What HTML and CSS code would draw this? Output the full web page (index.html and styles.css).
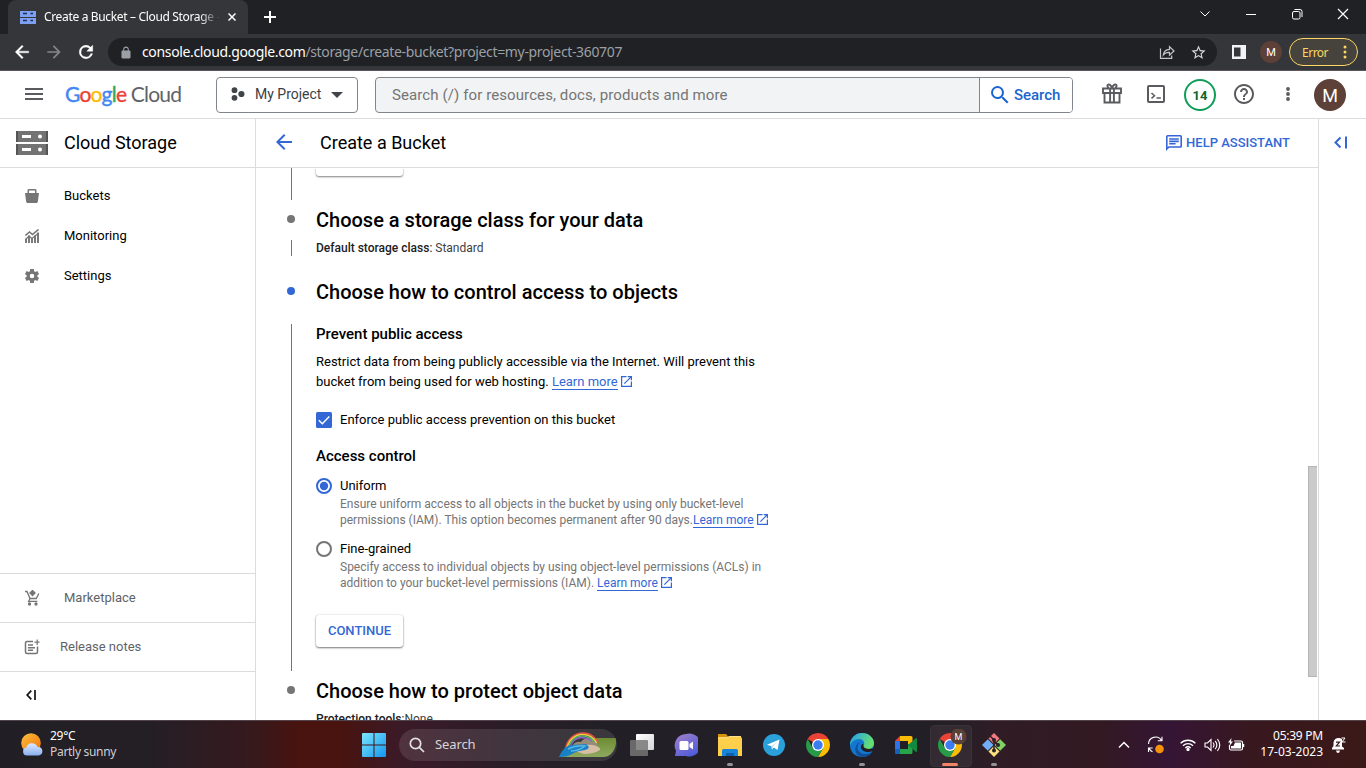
FILE: index.html
```html
<!DOCTYPE html>
<html lang="en">
<head>
<meta charset="utf-8">
<title>Create a Bucket – Cloud Storage</title>
<link rel="stylesheet" href="styles.css">
</head>
<body>
<div class="desktop">
  <div class="tabstrip">
    <div class="tab">
      <svg class="favicon" width="16" height="13" viewBox="0 0 16 13"><rect width="16" height="6" fill="#7da0f2"/><rect y="7" width="16" height="6" fill="#7da0f2"/><path d="M3 2.500h4M3 9.500h4" stroke="#202c55" stroke-width="1.500"/><path d="M10.500 2.500h2.500M10.500 9.500h2.500" stroke="#202c55" stroke-width="1.500"/></svg>
      <span class="tab-title">Create a Bucket – Cloud Storage -</span>
      <svg class="tab-close" width="8" height="8" viewBox="0 0 8 8"><path d="M.5.5l7 7M7.500.5l-7 7" stroke="#fff" stroke-width="1.500"/></svg>
    </div>
    <svg class="tab-new" width="12" height="12" viewBox="0 0 12 12"><path d="M6 0v12M0 6h12" stroke="#fff" stroke-width="2"/></svg>
    <div class="window-controls">
      <svg width="12" height="12" viewBox="0 0 12 12"><path d="M1.500 3.500L6 8l4.500-4.500" fill="none" stroke="#fff"/></svg>
      <svg width="12" height="12" viewBox="0 0 12 12"><path d="M1 6.500h10" stroke="#fff"/></svg>
      <svg width="12" height="12" viewBox="0 0 12 12" fill="none" stroke="#fff"><rect x="1.500" y="3.500" width="7.500" height="7.500" rx="1.500"/><path d="M3.500 1.500H9A2 2 0 0 1 11 3.500V9"/></svg>
      <svg width="12" height="12" viewBox="0 0 12 12"><path d="M1 1l10 10M11 1L1 11" stroke="#fff" stroke-width="1.200"/></svg>
    </div>
  </div>

  <div class="toolbar">
    <svg class="nav-back" width="20" height="20" viewBox="0 0 24 24" fill="#fff" stroke="#fff" stroke-width=".5"><path d="M20 11H7.830l5.590-5.590L12 4l-8 8 8 8 1.410-1.410L7.830 13H20z"/></svg>
    <svg class="nav-forward" width="20" height="20" viewBox="0 0 24 24" fill="#85868a"><path d="M12 4l-1.410 1.410L16.170 11H4v2h12.170l-5.580 5.590L12 20l8-8z"/></svg>
    <svg class="nav-reload" width="20" height="20" viewBox="0 0 24 24" fill="#fff" stroke="#fff" stroke-width=".6"><path d="M17.650 6.350A7.960 7.960 0 0 0 12 4a8 8 0 1 0 7.730 10h-2.080A6 6 0 1 1 12 6c1.660 0 3.140.69 4.220 1.780L13 11h7V4z"/></svg>
    <div class="omnibox">
      <svg class="lock" width="12" height="13" viewBox="3 0 18 23" fill="#9aa0a6"><path d="M18 8h-1V6c0-2.760-2.240-5-5-5S7 3.240 7 6v2H6c-1.100 0-2 .9-2 2v10c0 1.100.9 2 2 2h12c1.100 0 2-.9 2-2V10c0-1.100-.9-2-2-2zm-2.900 0H8.900V6a3.100 3.100 0 0 1 6.200 0z"/></svg>
      <span class="url"><b>console.cloud.google.com</b>/storage/create-bucket?project=my-project-360707</span>
      <svg class="share" width="16" height="16" viewBox="0 0 16 16" fill="none" stroke="#c4c5c8" stroke-width="1.200"><path d="M1.500 4.500v9.900h11.200v-3"/><path d="M4.300 11c.4-3.600 2.500-5.500 6.200-5.700V2.600L15 7l-4.500 4.200V8.400C7.700 8.300 5.800 9 4.300 11z"/></svg>
      <svg class="star" width="17" height="17" viewBox="0 0 24 24" fill="#d6d7d9"><path d="M22 9.240l-7.190-.62L12 2 9.190 8.630 2 9.240l5.460 4.730L5.820 21 12 17.270 18.180 21l-1.630-7.030zM12 15.400l-3.760 2.270 1-4.280-3.320-2.880 4.380-.38L12 6.100l1.710 4.040 4.380.38-3.320 2.880 1 4.280z"/></svg>
    </div>
    <svg class="sidepanel" width="14" height="14" viewBox="0 0 14 14"><path fill="#f1f3f4" fill-rule="evenodd" d="M0 0h14v14H0zM2 2.500v9h6.500v-9z"/></svg>
    <span class="profile-small">M</span>
    <div class="error-pill"><span>Error</span><svg width="4" height="14" viewBox="0 0 4 14" fill="#fdd663"><circle cx="2" cy="2" r="1.500"/><circle cx="2" cy="7" r="1.500"/><circle cx="2" cy="12" r="1.500"/></svg></div>
  </div>

  <header class="cloud-header">
    <svg class="menu" width="18" height="12" viewBox="0 0 18 12"><path d="M0 1h18M0 6h18M0 11h18" stroke="#5a5b5e" stroke-width="2"/></svg>
    <div class="logo"><span class="blue">G</span><span class="red">o</span><span class="yellow">o</span><span class="blue">g</span><span class="green">l</span><span class="red">e</span> <span class="cloud">Cloud</span></div>
    <div class="project">
      <svg width="14" height="14" viewBox="0 0 14 14" fill="#414549"><circle cx="3.500" cy="3.200" r="2.900"/><circle cx="3.500" cy="10.800" r="2.900"/><circle cx="10.400" cy="7" r="3.100"/></svg>
      <span>My Project</span>
      <svg class="caret" width="12" height="6" viewBox="0 0 12 6"><path d="M0 0h12L6 6z" fill="#414549"/></svg>
    </div>
    <div class="searchbar">
      <span class="placeholder">Search (/) for resources, docs, products and more</span>
      <div class="search-button"><svg width="24" height="24" viewBox="0 0 24 24" fill="#1b66d1"><path d="M15.500 14h-.79l-.28-.27A6.471 6.471 0 0 0 16 9.500 6.500 6.500 0 1 0 9.500 16c1.610 0 3.090-.59 4.230-1.570l.27.28v.79l5 4.990L20.490 19zm-6 0C7.010 14 5 11.990 5 9.500S7.010 5 9.500 5 14 7.010 14 9.500 11.990 14 9.500 14z"/></svg><span>Search</span></div>
    </div>
    <div class="header-icons">
      <div><svg width="20" height="21" viewBox="0 0 20 21" fill="none" stroke="#5a5b5e" stroke-width="1.900"><path d="M1 5.500h18v4.500H1zM2.500 10v9.500h15V10M8.100 5.500v14M11.900 5.500v14"/><path d="M10 5C8.800 2 7.400 1 6.100 1.600S5.400 4.500 7 5M10 5c1.200-3 2.600-4 3.900-3.400S14.600 4.500 13 5"/></svg></div>
      <div><svg width="18" height="18" viewBox="0 0 18 18" fill="none" stroke="#5a5b5e"><rect x="1" y="1" width="16" height="16" rx="1" stroke-width="2"/><path d="M4.500 8l3 2.700-3 2.700M9.500 13h4.300" stroke-width="1.500"/></svg></div>
      <div><span class="notice-count">14</span></div>
      <div><svg width="24" height="24" viewBox="0 0 24 24" fill="#5a5b5e"><path d="M11 18h2v-2h-2zM12 2C6.480 2 2 6.480 2 12s4.480 10 10 10 10-4.480 10-10S17.520 2 12 2zm0 18c-4.410 0-8-3.590-8-8s3.590-8 8-8 8 3.590 8 8-3.590 8-8 8zm0-14c-2.210 0-4 1.790-4 4h2c0-1.100.9-2 2-2s2 .9 2 2c0 2-3 1.750-3 5h2c0-2.250 3-2.500 3-5 0-2.210-1.790-4-4-4z"/></svg></div>
      <div><svg width="6" height="14" viewBox="0 0 6 14" fill="#5a5b5e"><circle cx="3" cy="2" r="1.900"/><circle cx="3" cy="7" r="1.900"/><circle cx="3" cy="12" r="1.900"/></svg></div>
      <div class="last"><span class="avatar">M</span></div>
    </div>
  </header>

  <div class="workspace">
    <nav class="sidebar">
      <div class="product">
        <svg width="32" height="24" viewBox="0 0 32 24"><path d="M0 0h32v11H0zM0 13h32v11H0z" fill="#737373"/><path d="M0 0h2v11H0zM30 0h2v11h-2zM0 13h2v11H0zM30 13h2v11h-2z" fill="#555"/><path d="M6 4h9v3H6zM6 17h9v3H6z" fill="#fff"/><circle cx="24" cy="5.500" r="2" fill="#fff"/><circle cx="24" cy="18.500" r="2" fill="#fff"/></svg>
        <span>Cloud Storage</span>
      </div>
      <div class="nav-list">
        <div class="nav-item"><svg width="14" height="14" viewBox="0 0 14 14" fill="#757575"><path fill-rule="evenodd" d="M3.500 0h7l1 1v3H14l-1.200 9-1 1H2.200l-1-1L0 4h2.500V1zM4 1.500V4h6V1.500z"/></svg><span>Buckets</span></div>
        <div class="nav-item"><svg width="14" height="14" viewBox="0 0 14 14" fill="none" stroke="#757575"><path d="M.4 6.500L4.500 3l3 2.500L13.500.5" stroke-width="1.600"/><path d="M1 14V10M4 14V6.500M7 14V9M10 14V6.500M13 14V3.500" stroke-width="1.900"/><path d="M.4 10.500L4 7l3 2.500 6-5" stroke-width="1.200"/></svg><span>Monitoring</span></div>
        <div class="nav-item"><svg width="14" height="14" viewBox="2 2 20 20"><path fill="#757575" fill-rule="evenodd" d="M9.500 2h5l.6 3.300 1.500.9 3.100-1.200 2.300 4.200-2.500 2v1.600l2.500 2-2.300 4.200-3.100-1.200-1.500.9-.6 3.300h-5l-.6-3.300-1.500-.9L4.300 19 2 14.800l2.500-2v-1.600L2 9.200 4.300 5l3.100 1.200 1.500-.9zM12 8.800a3.200 3.200 0 1 0 0 6.400 3.200 3.200 0 0 0 0-6.400z"/></svg><span>Settings</span></div>
      </div>
      <div class="side-foot market"><svg width="16" height="16" viewBox="0 0 16 16" fill="none" stroke="#757575" stroke-width="1.300"><path d="M1 1.500h2l3 7h6.300l2.500-5"/><path d="M6 8.500L4.700 11.300h8.600"/><path d="M8.500.5L11 3 8.500 5.500 6 3z" fill="#757575"/><circle cx="5.500" cy="14" r="1" fill="#757575"/><circle cx="12" cy="14" r="1" fill="#757575"/></svg><span>Marketplace</span></div>
      <div class="side-foot notes"><svg width="16" height="16" viewBox="0 0 16 16" fill="none" stroke="#757575" stroke-width="1.500"><path d="M9 2.500H3A1.500 1.500 0 0 0 1.500 4v9A1.500 1.500 0 0 0 3 14.500h9a1.500 1.500 0 0 0 1.500-1.500V7.500"/><path d="M4 6h5M4 8.700h7M4 11.300h5"/><path d="M13.200.5v5.400M10.500 3.200h5" stroke-width="1.200"/></svg><span>Release notes</span></div>
      <div class="side-foot collapse"><svg width="10" height="10" viewBox="0 0 10 10" fill="none" stroke="#111" stroke-width="1.700"><path d="M5.300.7L1.200 5l4.100 4.300M9 0v10"/></svg></div>
    </nav>

    <main class="main">
      <div class="page-bar">
        <svg width="24" height="24" viewBox="0 0 24 24" fill="#3367d6"><path d="M20 11H7.830l5.590-5.590L12 4l-8 8 8 8 1.410-1.410L7.830 13H20z"/></svg>
        <h1>Create a Bucket</h1>
        <div class="help"><svg width="16" height="16" viewBox="2 2 20 20" fill="#3367d6"><path d="M4 4h16v12H5.170L4 17.170V4m0-2c-1.100 0-1.990.9-1.990 2L2 22l4-4h14c1.100 0 2-.9 2-2V4c0-1.100-.9-2-2-2zm2 10h8v2H6zm0-3h12v2H6zm0-3h12v2H6z"/></svg><span>HELP ASSISTANT</span></div>
      </div>
      <div class="scroller">
        <div class="steps">
          <section class="step location"><div class="rail"></div><div class="button-end"></div></section>
          <section class="step storage">
            <i class="dot"></i><h2>Choose a storage class for your data</h2>
            <div class="rail"></div><p class="summary"><b>Default storage class</b>: <span>Standard</span></p>
          </section>
          <section class="step access">
            <i class="dot active"></i><h2>Choose how to control access to objects</h2>
            <div class="rail"></div>
            <div class="form">
              <h3>Prevent public access</h3>
              <p class="copy">Restrict data from being publicly accessible via the Internet. Will prevent this<br>bucket from being used for web hosting. <a>Learn more</a><svg class="ext" width="11" height="11" viewBox="3 3 18 18" fill="#3367d6"><path d="M19 19H5V5h7V3H3v18h18v-9h-2zM14 3v2h3.590l-9.830 9.830 1.410 1.410L19 6.410V10h2V3z"/></svg></p>
              <label class="choice check"><svg width="16" height="16" viewBox="0 0 16 16"><rect width="16" height="16" rx="1.500" fill="#3367d6"/><path d="M2.800 8.200l3.500 3.500 7-7.200" fill="none" stroke="#fff" stroke-width="1.500"/></svg><span>Enforce public access prevention on this bucket</span></label>
              <h3>Access control</h3>
              <label class="choice uniform"><svg width="16" height="16" viewBox="0 0 16 16"><circle cx="8" cy="8" r="7" fill="none" stroke="#3367d6" stroke-width="2"/><circle cx="8" cy="8" r="4.200" fill="#3367d6"/></svg><span>Uniform</span></label>
              <p class="hint">Ensure uniform access to all objects in the bucket by using only bucket-level<br>permissions (IAM). This option becomes permanent after 90 days.<a>Learn more</a><svg class="ext" width="11" height="11" viewBox="3 3 18 18" fill="#3367d6"><path d="M19 19H5V5h7V3H3v18h18v-9h-2zM14 3v2h3.590l-9.830 9.830 1.410 1.410L19 6.410V10h2V3z"/></svg></p>
              <label class="choice fine"><svg width="16" height="16" viewBox="0 0 16 16"><circle cx="8" cy="8" r="7" fill="none" stroke="#757575" stroke-width="2"/></svg><span>Fine-grained</span></label>
              <p class="hint">Specify access to individual objects by using object-level permissions (ACLs) in<br>addition to your bucket-level permissions (IAM). <a>Learn more</a><svg class="ext" width="11" height="11" viewBox="3 3 18 18" fill="#3367d6"><path d="M19 19H5V5h7V3H3v18h18v-9h-2zM14 3v2h3.590l-9.830 9.830 1.410 1.410L19 6.410V10h2V3z"/></svg></p>
              <div class="continue">CONTINUE</div>
            </div>
          </section>
          <section class="step protect">
            <i class="dot"></i><h2>Choose how to protect object data</h2>
            <div></div><p class="summary"><b>Protection tools</b>:<span>None</span></p>
          </section>
        </div>
        <div class="scroll-track"><div class="scroll-thumb"></div></div>
      </div>
    </main>
    <aside class="info-rail"><svg width="14" height="13" viewBox="0 0 14 13" fill="none" stroke="#3367d6" stroke-width="2"><path d="M6.500 1.500L1.500 6.500l5 5M12 .5v12"/></svg></aside>
  </div>

  <footer class="taskbar">
    <svg class="weather-icon" width="22" height="23" viewBox="0 0 22 23"><defs><linearGradient id="sun" x2="1" y2="1"><stop stop-color="#fcc13b"/><stop offset="1" stop-color="#f2700d"/></linearGradient><linearGradient id="puff" x2="0" y2="1"><stop stop-color="#dbe9ff"/><stop offset="1" stop-color="#8ab0ef"/></linearGradient></defs><circle cx="10" cy="10" r="9.800" fill="url(#sun)"/><path d="M6 22.500a4 4 0 0 1-.8-7.900A6 6 0 0 1 16.500 14a4.300 4.300 0 0 1 1.300 8.500z" fill="url(#puff)"/></svg>
    <div class="weather"><div>29°C</div><div class="cond">Partly sunny</div></div>
    <svg class="start" width="24" height="24" viewBox="0 0 24 24"><defs><linearGradient id="win" x2="1" y2="1"><stop stop-color="#7ce6fd"/><stop offset="1" stop-color="#1296ef"/></linearGradient></defs><path fill="url(#win)" d="M1 0h10.500v11.500H0V1q0-1 1-1zM12.500 0H23q1 0 1 1v10.500H12.500zM0 12.500h11.500V24H1q-1 0-1-1zM12.500 12.500H24V23q0 1-1 1H12.500z"/></svg>
    <div class="task-search">
      <svg width="16" height="16" viewBox="0 0 16 16" fill="none" stroke="#e4e1e4" stroke-width="1.700"><circle cx="6.500" cy="6.500" r="5.200"/><path d="M10.300 10.300L15 15"/></svg><span>Search</span>
      <svg class="rainbow" width="58" height="25" viewBox="0 0 58 25"><defs><linearGradient id="hill" x2="0" y2="1"><stop stop-color="#6d8c34"/><stop offset="1" stop-color="#8fa95e"/></linearGradient></defs><path d="M33 6h24q1 10-5 16-3 3-8 3H0l6-5z" fill="url(#hill)"/><path d="M12 15Q16 9 22 10q3-5 9-3 5 1 8 5l-3 4z" fill="#958b78"/><path d="M10 17q10-5 24-4 8 2 7 5-6 4-16 4z" fill="#d6bda5"/><g fill="none"><path d="M6 20C7 7 16 1 24 1s13 5 15 10" stroke="#e9524a" stroke-width="1.500"/><path d="M7.500 19C9 8 16 2.500 23.500 2.500S35 6 37.500 11" stroke="#f7cf3e" stroke-width="1.600"/><path d="M9 18C10 9 17 4 23 4s10 3 12.500 6" stroke="#54b867" stroke-width="1.500"/><path d="M10.500 17C12 10 17 5.500 23 5.500S31 8 33 9" stroke="#8c62c7" stroke-width="1.300"/></g><path d="M0 25Q5 13 13 13l14-1q6 4-1 6-9 1-13 4-4 3-13 3z" fill="#1880c4"/><path d="M9 17q8-4 17-3-6 5-14 5" fill="none" stroke="#58b9e7" stroke-width="1.500"/></svg>
    </div>
    <div class="apps">
      <div class="app"><svg width="24" height="22" viewBox="0 0 24 22"><defs><linearGradient id="pane" x2="1" y2="1"><stop stop-color="#fff"/><stop offset="1" stop-color="#d5d5d5"/></linearGradient></defs><rect x="6" width="18" height="16" rx="1" fill="url(#pane)"/><rect y="6" width="18" height="16" rx="1" fill="#777" fill-opacity=".85"/></svg></div>
      <div class="app"><svg width="24" height="24" viewBox="0 0 24 24"><defs><linearGradient id="chat" x2=".7" y2="1"><stop stop-color="#a481c7"/><stop offset="1" stop-color="#4d5bdb"/></linearGradient></defs><path d="M12 1a11.500 11.500 0 1 1 0 22H1l1-5A11.500 11.500 0 0 1 12 1z" fill="url(#chat)"/><rect x="5.500" y="8" width="9" height="9" rx="1.500" fill="#fff"/><path d="M15.500 11L19 8.500v8L15.500 14z" fill="#fff"/></svg></div>
      <div class="app open"><svg width="24" height="22" viewBox="0 0 24 22"><path d="M0 0h8l2.500 3H0z" fill="#d89409"/><path d="M0 3h22.500q1.500 0 1.500 1.500V22H0z" fill="#fdcf4b"/><path d="M0 4h9l2-1.500h12" fill="none" stroke="#ffe08a"/><path d="M4 22v-5.500q0-1.500 1.500-1.500h13q1.500 0 1.500 1.500V22z" fill="#1785d8"/><path d="M8 19h8v3H8z" fill="#0d60a9"/></svg></div>
      <div class="app"><svg width="22" height="22" viewBox="0 0 22 22"><circle cx="11" cy="11" r="11" fill="#2aa1da"/><path d="M4 10.800L16.500 5.500 14.500 16 10.800 13.500 9 15.500 8.500 12.300z" fill="#fff"/><path d="M8.500 12.300L14 8l-4 4.800-1 2.700z" fill="#c5dceb"/></svg></div>
      <div class="app"><svg width="24" height="24" viewBox="0 0 24 24"><path d="M12 12L1.610 6A12 12 0 0 1 22.390 6z" fill="#ea4335"/><path d="M12 12V6h10.390A12 12 0 0 1 12 24l5.200-9z" fill="#fbbc05"/><path d="M6.800 15L1.610 6A12 12 0 0 0 12 24l5.200-9z" fill="#289b48"/><circle cx="12" cy="12" r="6" fill="#fff"/><circle cx="12" cy="12" r="4.700" fill="#3b7df0"/></svg></div>
      <div class="app open"><svg width="24" height="24" viewBox="0 0 24 24"><defs><linearGradient id="edge" x2="1" y2=".4"><stop stop-color="#249ff0"/><stop offset="1" stop-color="#66df70"/></linearGradient></defs><path d="M0 12C0 5 5 0 12 0s12 5 12 12l-2 7q-4 5-10 5C5 24 0 19 0 12z" fill="#1477cf"/><path d="M0 10C2 3 7 0 12 0c7 0 12 5 12 10 0 4-3 6-6 6-4 0-5-2-4-4 1-3-1-6-5-6C5 6 2 8 0 12z" fill="url(#edge)"/><path d="M10 9c-5 5-2 12 5 12 3 0 5-1 7-2-3 5-8 5-10 5C6 23 4 17 6 13q1-3 4-4z" fill="#124f99"/><path d="M13.500 11.500c-1.500 3 3 6 10.500 3.500l-1 3c-7 3-13-1-12-5q1-3 2.500-1.500z" fill="#221f26"/></svg></div>
      <div class="app"><svg width="22" height="18" viewBox="0 0 22 18"><path d="M5 0v5H0z" fill="#ea4335"/><path d="M5 0h11q1.500 0 1.500 1.500V9H13V5H5z" fill="#fbbc05"/><path d="M0 5h5v8H0z" fill="#2e73e8"/><path d="M0 13h5v5H1q-1 0-1-1z" fill="#1760be"/><path d="M5 13h8V8h4.500v8.500q0 1.500-1.500 1.500H5z" fill="#27a34a"/><path d="M13 9l8-7q1 0 1 1v12q0 1-1 1z" fill="#128940"/></svg></div>
      <div class="app open selected"><svg width="29" height="28" viewBox="0 0 29 28"><g transform="translate(0 4)"><path d="M12 12L1.610 6A12 12 0 0 1 22.390 6z" fill="#ea4335"/><path d="M12 12V6h10.390A12 12 0 0 1 12 24l5.200-9z" fill="#fbbc05"/><path d="M6.800 15L1.610 6A12 12 0 0 0 12 24l5.200-9z" fill="#289b48"/><circle cx="12" cy="12" r="6" fill="#fff"/><circle cx="12" cy="12" r="4.700" fill="#3b7df0"/></g><circle cx="20.500" cy="7.500" r="8" fill="#5b4037"/><text x="20.500" y="10.600" class="badge-letter">M</text></svg></div>
      <div class="app open"><svg width="24" height="24" viewBox="0 0 24 24"><path d="M12 0l5.500 5.500L12 11 6.500 5.500z" fill="#f27980"/><path d="M5.800 6.200L11.500 12l-5.700 5.800L0 12z" fill="#72abf7"/><path d="M18.200 6.200L24 12l-5.800 5.800L12.500 12z" fill="#82d164"/><path d="M12 13l5.500 5.500L12 24l-5.500-5.500z" fill="#fbe27d"/><path d="M8 3l4 4v11M12 8l4 4" stroke="#2b2227" stroke-width="1.500" fill="none"/><circle cx="12" cy="7" r="2" fill="#2b2227"/><circle cx="12" cy="17.500" r="2" fill="#2b2227"/><circle cx="16" cy="12" r="2" fill="#2b2227"/></svg></div>
    </div>
    <div class="tray">
      <svg class="tray-up" width="12" height="8" viewBox="0 0 12 8"><path d="M1 6.500l5-5 5 5" fill="none" stroke="#fff" stroke-width="1.500"/></svg>
      <svg class="tray-update" width="18" height="18" viewBox="0 0 18 18" fill="none" stroke="#fff" stroke-width="1.100"><path d="M1.500 8A7 7 0 0 1 14.500 4.500M15 .8v4h-4.200M5.500 15.800A7 7 0 0 1 2 12M1.500 16v-4h4.200"/><circle cx="12.500" cy="13" r="4.300" fill="#f7910b" stroke="none"/></svg>
      <svg class="tray-wifi" width="16" height="13" viewBox="0 0 16 13" fill="none" stroke="#fff" stroke-width="1.300"><path d="M.6 5.300a10.500 10.500 0 0 1 14.800 0M3 7.700a7 7 0 0 1 10 0M5.300 10a4 4 0 0 1 5.400 0"/><circle cx="8" cy="11.500" r="1" fill="#fff"/></svg>
      <svg class="tray-sound" width="17" height="14" viewBox="0 0 17 14" fill="none" stroke="#fff" stroke-width="1.100"><path d="M1 5h2.500L7 1.500v11L3.500 9H1zM9 4.500q2 2.500 0 5M11.200 2.800q3.300 4.200 0 8.400M13.400 1q4.700 6 0 12"/></svg>
      <svg class="tray-battery" width="17" height="13" viewBox="0 0 17 13"><path d="M6 3h7q1.500 0 1.500 1.500v6q0 1.500-1.500 1.500H3q-1.500 0-1.500-1.500V7" fill="none" stroke="#fff" stroke-width="1.200"/><path d="M7 4.500h6v6H3V8h2.500z" fill="#fff"/><path d="M15.500 6v3" stroke="#fff" stroke-width="1.500"/><path d="M3.500 0L0 4.500h2L1.500 8 5 3.500H3z" fill="#fff"/></svg>
      <div class="clock"><div>05:39 PM</div><div class="date">17-03-2023</div></div>
      <svg class="tray-bell" width="14" height="16" viewBox="0 0 14 16"><path d="M0 11l1.500-2V6a5 5 0 0 1 6-5L10 2v7.500L12 11v1.500H0zM4 13.500h4Q7.500 16 6 16t-2-2.500z" fill="#fff"/><path d="M4 5.200h3.500L4.300 9H8" fill="none" stroke="#381a20" stroke-width="1.200"/><path d="M9.500 1H13l-3 4h3.500" fill="none" stroke="#fff"/></svg>
    </div>
  </footer>
</div>
</body>
</html>
```
FILE: styles.css
```css
* { box-sizing: border-box; }
body { margin: 0; font-family: Roboto, "Liberation Sans", sans-serif; font-size: 13px; color: #000; overflow: hidden; }
svg { display: block; flex: none; }
h1, h2, h3, p { margin: 0; font-weight: 400; }
b { font-weight: 500; }
.desktop { width: 1366px; height: 768px; display: flex; flex-direction: column; background: #fff; white-space: nowrap; }

/* Browser chrome */
.tabstrip { height: 34px; flex: none; display: flex; align-items: center; background: #202124; font-family: "Noto Sans", sans-serif; }
.tab { width: 240px; height: 34px; margin-left: 8px; padding-left: 12px; display: flex; align-items: center; background: #35363a; border-radius: 8px 8px 0 0; color: #fff; }
.tab-title { width: 176px; margin-left: 8px; padding-bottom: 1px; overflow: hidden; font-size: 12px; letter-spacing: -.34px; -webkit-mask-image: linear-gradient(90deg, #000 155px, transparent 176px); mask-image: linear-gradient(90deg, #000 155px, transparent 176px); }
.tab-close { margin-left: 8px; }
.tab-new { margin-left: 16px; }
.window-controls { margin: -6px 17px 0 auto; display: flex; gap: 34px; }
.toolbar { height: 37px; flex: none; display: flex; align-items: center; background: #35363a; border-bottom: 1px solid #5a575c; font-family: "Noto Sans", sans-serif; }
.nav-back { margin-left: 12px; }
.nav-forward { margin-left: 12px; }
.nav-reload { margin-left: 12px; }
.omnibox { width: 1109px; height: 28px; margin-left: 12px; padding: 0 10px 0 12px; display: flex; align-items: center; border-radius: 14px; background: #202124; }
.url { margin-left: 10px; padding-bottom: 2px; color: #9aa0a6; font-size: 14px; letter-spacing: -.35px; }
.url b { color: #fff; font-weight: 400; }
.share { margin-left: auto; }
.star { margin-left: 15px; }
.sidepanel { margin-left: 15px; }
.profile-small { width: 22px; height: 22px; margin-left: 14px; border-radius: 50%; background: #5d4037; color: #fff; text-align: center; font: 11px/23px Roboto, sans-serif; }
.error-pill { width: 69px; height: 28px; margin-left: 7px; padding: 0 10px 0 12px; display: flex; align-items: center; justify-content: space-between; border: 1px solid #fdd663; border-radius: 14px; background: #45433c; color: #fdd663; font-size: 12px; letter-spacing: -.5px; }

/* Cloud console header */
.cloud-header { height: 48px; flex: none; display: flex; align-items: center; border-bottom: 1px solid #dcdcdc; }
.menu { margin-left: 25px; margin-top: -2px; }
.logo { width: 129px; margin-left: 22px; margin-top: -1px; font: 21px/30px Lato, sans-serif; letter-spacing: -.8px; color: #5f6368; }
.blue { color: #4285f4; -webkit-text-stroke: .4px; }
.red { color: #ea4335; -webkit-text-stroke: .4px; }
.yellow { color: #fbbc04; -webkit-text-stroke: .4px; }
.green { color: #34a853; -webkit-text-stroke: .4px; }
.project { width: 142px; height: 36px; margin-left: 22px; padding: 0 0 2px 14px; display: flex; align-items: center; border: 1px solid #80868b; border-radius: 4px; color: #3c4043; font-size: 14px; }
.project span { width: 67px; margin-left: 10px; }
.caret { margin-left: 9px; margin-top: 2px; }
.searchbar { width: 698px; height: 36px; margin-left: 17px; display: flex; align-items: center; border: 1px solid #80868b; border-radius: 4px; background: #f1f3f4; overflow: hidden; }
.placeholder { width: 603px; padding-left: 16px; color: #757575; font-size: 15px; letter-spacing: .1px; }
.search-button { flex: 1; height: 34px; padding-left: 8px; display: flex; align-items: center; gap: 2px; border-left: 1px solid #80868b; background: #fff; color: #1b66d1; font-size: 15px; font-weight: 500; letter-spacing: -.05px; }
.header-icons { margin-left: 17px; display: grid; grid-template-columns: repeat(6, 44px); align-items: center; justify-items: center; }
.header-icons svg { margin-top: -2px; }
.notice-count { width: 32px; height: 32px; display: block; border: 2px solid #0f9d58; border-radius: 50%; color: #0d652d; text-align: center; font-size: 13px; line-height: 29px; font-weight: 700; }
.avatar { width: 32px; height: 32px; display: block; border-radius: 50%; background: #5d4037; color: #fff; text-align: center; font-size: 18px; line-height: 33px; }
.last { padding-right: 4px; }

/* Sidebar */
.workspace { height: 601px; flex: none; display: flex; }
.sidebar { width: 256px; display: flex; flex-direction: column; border-right: 1px solid #dcdcdc; }
.product { height: 49px; padding-left: 16px; display: flex; align-items: center; gap: 16px; border-bottom: 1px solid #dcdcdc; font-size: 18px; }
.product span, .nav-item span, .side-foot span { padding-bottom: 2px; }
.nav-list { flex: 1; padding-top: 8px; }
.nav-item { height: 40px; padding-left: 25px; display: flex; align-items: center; gap: 25px; }
.side-foot { height: 49px; padding-left: 24px; display: flex; align-items: center; border-top: 1px solid #dcdcdc; color: #5f6368; }
.market { gap: 24px; }
.notes { gap: 20px; }
.collapse { padding-left: 26px; padding-bottom: 2px; }

/* Page */
.main { width: 1062px; display: flex; flex-direction: column; }
.page-bar { height: 49px; flex: none; padding: 0 28px 0 16px; display: flex; align-items: center; border-bottom: 1px solid #dcdcdc; }
.page-bar > svg { margin-top: -2px; }
h1 { margin-left: 24px; padding-bottom: 2px; font-size: 18px; }
.help { margin-left: auto; display: flex; align-items: center; gap: 4px; color: #3367d6; font-weight: 500; }
.help span { padding-bottom: 2px; }
.scroller { height: 552px; overflow: hidden; display: flex; }
.steps { flex: 1; }
.scroll-track { width: 10px; padding-top: 298px; }
.scroll-thumb { width: 9px; height: 211px; border: 1px solid #b5b5b5; border-right: 0; background: #cbcbcb; }
.info-rail { width: 48px; padding: 17px 0 0 15px; border-left: 1px solid #dcdcdc; }
.step { display: grid; grid-template-columns: 60px 1fr; }
.dot { width: 8px; height: 8px; margin: 7px 0 0 31px; border-radius: 50%; background: #757575; }
.dot.active { background: #3367d6; }
.rail { width: 1px; margin-left: 35px; background: #757575; }
h2 { font-size: 20px; line-height: 24px; font-weight: 500; }
.button-end { width: 87px; height: 8px; border-radius: 0 0 3px 3px; box-shadow: 0 1px 2px rgba(0, 0, 0, .5); }
.location { height: 32px; margin-bottom: 8px; }
.storage { grid-template-rows: 24px 16px; row-gap: 8px; margin-bottom: 24px; }
.summary { font-size: 12px; line-height: 16px; color: #212121; }
.summary span { color: #3c4043; }
.access { grid-template-rows: 24px 347px; row-gap: 20px; margin-bottom: 8px; }
.protect { grid-template-rows: 24px 16px; row-gap: 8px; }
h3 { font-size: 15px; line-height: 20px; font-weight: 500; }
.copy { margin: 8px 0 18px; line-height: 20px; }
a { display: inline-block; line-height: 15px; border-bottom: 1px solid #3367d6; color: #3367d6; }
.ext { display: inline-block; margin-left: 3px; vertical-align: -1px; }
.choice { display: flex; align-items: center; gap: 8px; height: 16px; }
.choice span { padding-bottom: 2px; }
.check { height: 20px; margin-bottom: 16px; }
.uniform { margin-top: 12px; }
.fine { margin-top: 13px; }
.hint { margin: 2px 0 0 24px; font-size: 12px; line-height: 16px; color: #757575; }
.hint a { line-height: 14px; }
.hint .ext { vertical-align: -1px; }
.continue { width: 87px; height: 32px; margin-top: 24px; border-radius: 3px; box-shadow: 0 1px 2px rgba(0, 0, 0, .5), 0 0 2px rgba(0, 0, 0, .15); color: #3367d6; text-align: center; line-height: 32px; font-weight: 500; }

/* Taskbar */
.taskbar { height: 48px; flex: none; display: flex; align-items: center; border-top: 1px solid #514349; background: linear-gradient(90deg, #211f25 0, #241f25 150px, #35191d 250px, #49130f 300px, #49130f 340px, #3b1a27 400px, #2b1d28 500px, #222026 600px, #222026 940px, #301c25 1000px, #321922 1100px, #351535 1170px, #38181f 1250px, #3b1918); color: #fff; font: 12px/16px "Noto Sans", sans-serif; }
.weather-icon { margin-left: 21px; }
.weather { width: 312px; margin-left: 7px; padding-bottom: 2px; letter-spacing: -.3px; }
.cond { color: #d1ced2; }
.task-search { width: 218px; height: 32px; margin-left: 13px; padding-left: 10px; display: flex; align-items: center; border-radius: 16px; background: rgba(255, 255, 255, .11); color: #d8d5d9; font-size: 13px; overflow: hidden; }
.task-search span { width: 42px; margin-left: 10px; padding-bottom: 2px; letter-spacing: -.1px; }
.rainbow { margin-left: auto; }
.apps { display: flex; margin-left: 3px; }
.app { width: 44px; height: 44px; display: flex; align-items: center; justify-content: center; position: relative; }
.open::after { content: ""; position: absolute; bottom: 1px; left: 19px; width: 6px; height: 3px; border-radius: 2px; background: #959297; }
.selected::before { content: ""; position: absolute; left: 2px; top: 2px; width: 40px; height: 40px; border: 1px solid #3a3239; border-radius: 4px; background: #342b32; }
.selected svg { position: relative; margin: -4px 0 0 5px; }
.selected::after { left: 14px; width: 16px; background: #f58266; }
.badge-letter { fill: #fff; font: 9px Roboto, sans-serif; text-anchor: middle; }
.tray { margin-left: auto; display: flex; align-items: center; }
.tray-update { margin-left: 17px; }
.tray-wifi { margin-left: 15px; }
.tray-sound { margin-left: 8px; }
.tray-battery { margin-left: 7px; }
.clock { width: 78px; padding-bottom: 2px; text-align: right; letter-spacing: -.25px; }
.date { letter-spacing: 0; }
.tray-bell { margin: 0 20px 0 9px; }
```
